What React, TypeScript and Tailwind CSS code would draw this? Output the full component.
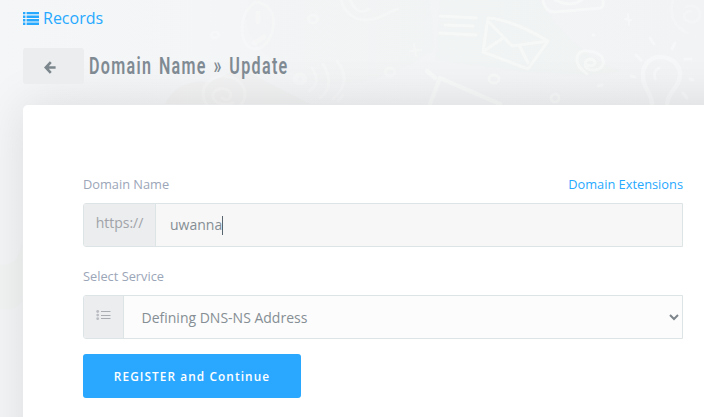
import type { ReactNode } from "react";

function Doodles() {
  return (
    <svg
      className="pointer-events-none absolute inset-0"
      width="704"
      height="417"
      fill="none"
      stroke="#fafafa"
      strokeOpacity="0.6"
      strokeWidth="3"
      strokeLinecap="round"
      strokeLinejoin="round"
    >
      <g fill="#f2f4f1" fillOpacity="0.35" stroke="none">
        <path d="M250 0H430L435 50Q340 110 280 65Q235 35 250 0Z" />
        <path d="M165 104Q178 78 210 82L240 68L310 104Z" fill="#eeedeb" />
        <path d="M440 0H540Q575 55 620 70Q600 85 435 60Z" />
        <path d="M0 264Q18 268 22 240V302Q14 312 0 309Z" />
      </g>
      <g strokeOpacity="0.4">
        <path d="M256 2C245 8 240 22 243 37C246 51 259 53 267 42C277 28 277 5 256 2Z" />
        <path d="M258 13V22M254 43L264 37" strokeWidth="5" />
        <path d="M341 0C344 12 355 21 367 20C381 19 387 12 398 9M350 0Q358 17 369 9" />
        <ellipse cx="313" cy="19" rx="4.5" ry="4" />
        <ellipse cx="215" cy="35" rx="4" ry="3" />
        <ellipse cx="224" cy="94" rx="21" ry="18" />
        <path d="M233 103C212 109 207 91 220 89C236 87 232 105 222 98" />
        <ellipse cx="300" cy="79" rx="5" ry="4" strokeWidth="5" />
        <path d="M312 68Q322 83 309 91M323 64Q336 86 320 98M337 61Q353 81 333 99M343 95L338 101" />
        <path d="M410 51L421 50M414 44L416 56" strokeWidth="2" />
        <ellipse cx="390" cy="72" rx="5" ry="4" />
      </g>
      <path d="M440 16L476 18M445 25L473 26M440 33L476 35" />
      <path d="M488 18L483 52L528 69L548 41Q513 20 488 18ZM489 22L512 46L548 41M484 51L503 38M519 45L528 63" />
      <path d="M543 0Q545 12 555 12L601 8Q604 6 603 0M555 0Q570 8 582 0" />
      <path d="M628 14L629 25M625 19L631 20" strokeWidth="2" />
      <path d="M587 74C571 63 576 49 588 51C606 52 608 68 595 70C582 71 583 59 591 59C599 61 594 68 587 65" />
      <ellipse cx="494" cy="79" rx="5" ry="4" />
      <ellipse cx="555" cy="98" rx="4" ry="4" />
      <path d="M598 86L602 85M593 35L594 35" />
      <path d="M430 104L440 78L500 104M427 71L435 78" strokeWidth="4.5" />
      <path d="M652 104C652 92 642 89 643 74C644 50 679 53 680 74C680 88 668 91 667 104" strokeWidth="4.5" />
      <path d="M655 79Q653 71 659 68M650 38L654 44M675 43L672 49M636 55L641 60M631 76L635 77M685 59L691 59M690 79L693 80M683 93L687 98" />
      <path d="M673 0Q667 22 687 33M686 7C697 1 707 17 694 22C682 23 681 11 691 11" strokeOpacity="0.25" />
    </svg>
  );
}

function RecordsIcon() {
  return (
    <svg width="16" height="13" viewBox="0 0 16 13" fill="#27a9ff">
      <path d="M0 0H2.4V2.3H0ZM0 3.6H2.4V5.9H0ZM0 7.1H2.4V9.4H0ZM0 10.6H2.4V12.9H0ZM3.6 0H16V2.3H3.6ZM3.6 3.6H16V5.9H3.6ZM3.6 7.1H16V9.4H3.6ZM3.6 10.6H16V12.9H3.6Z" />
    </svg>
  );
}

function BackIcon() {
  return (
    <svg width="12" height="13" viewBox="0 0 12 13" fill="none" stroke="#7c868d" strokeWidth="2.6">
      <path d="M6.8 1.2L1.8 6.5L6.8 11.8M2 6.5H11.6" />
    </svg>
  );
}

function ServiceListIcon() {
  return (
    <svg width="15" height="11" viewBox="0 0 15 11" fill="none" stroke="#a9adb2">
      <path d="M5 1.5H14.5M5 5.5H14.5M5 8.5H14.5" />
      <g fill="#b9bcc1" stroke="none">
        <circle cx="1.7" cy="1.5" r="1.4" />
        <circle cx="1.7" cy="5.1" r="1.4" />
        <circle cx="1.7" cy="8.7" r="1.4" />
      </g>
    </svg>
  );
}

function InputGroup({ addon, children }: { addon: ReactNode; children: ReactNode }) {
  return (
    <div className="flex h-11 w-[600px] overflow-hidden rounded-l-[3px] border border-[#dde4e6] text-sm">
      <div className="flex shrink-0 justify-center border-r border-[#dde4e6] bg-[#ebedef] text-[#a0a3a8]">
        {addon}
      </div>
      {children}
    </div>
  );
}

export default function App() {
  return (
    <main className="relative h-[417px] w-[704px] overflow-hidden bg-[#f4f6f8] bg-linear-to-r from-[#f5f6f8] to-[#f1f3f5] font-['Open_Sans',sans-serif]">
      <Doodles />
      <div className="relative pl-[23px]">
        <a className="flex h-9 items-center gap-1 text-base text-[#27a9ff]">
          <RecordsIcon />
          <span>Records</span>
        </a>
        <header className="mt-3 flex h-9 items-center">
          <button className="flex h-9 w-[61px] items-center rounded-[3px] bg-[#ebedef] pt-[2px] pl-[21px]">
            <BackIcon />
          </button>
          <h1 className="ml-[5px] origin-left scale-x-[0.685] pt-[2px] whitespace-nowrap font-[Roboto] text-[23.5px] font-semibold tracking-[1.9px] text-[#7f8a93] [word-spacing:2px]">
            Domain Name » Update
          </h1>
        </header>
        <section className="mt-[21px] h-[400px] w-[760px] rounded-[5px] bg-white px-[60px] pt-[71px] shadow-[0_0_50px_rgba(0,0,0,0.11)]">
          <div className="flex h-[18px] w-[600px] items-center justify-between text-[12.8px]">
            <label className="text-[#9ba6b8]">Domain Name</label>
            <a className="text-[#27a9ff]">Domain Extensions</a>
          </div>
          <div className="mt-[9px]">
            <InputGroup addon={<span className="w-[71px] pt-[9px] text-center">https://</span>}>
              <div className="flex flex-1 items-center bg-[#f7f7f7] pl-[14px] text-[#858e94]">
                uwanna<span className="h-[19px] w-px bg-[#59656e]" />
              </div>
            </InputGroup>
          </div>
          <div className="mt-[21px] flex h-[18px] items-center text-[12.8px] text-[#9ba6b8]">Select Service</div>
          <div className="mt-[9px]">
            <InputGroup addon={<span className="flex w-[39px] justify-center pt-[14px]"><ServiceListIcon /></span>}>
              <div className="flex flex-1 items-center justify-between bg-[#fcfcfc] pt-px pr-[3px] pl-[17.5px] text-[#858e94]">
                Defining DNS-NS Address
                <svg width="10" height="7" viewBox="0 0 10 7" fill="none" stroke="#7d858b" strokeWidth="2">
                  <path d="M1 1L5 5L9 1" />
                </svg>
              </div>
            </InputGroup>
          </div>
          <button className="mt-[15px] block h-11 w-[218px] rounded-[3px] bg-[#2aa8ff] pt-[2px] text-[11.8px] font-semibold tracking-[1.1px] text-white">
            REGISTER and Continue
          </button>
        </section>
      </div>
    </main>
  );
}
